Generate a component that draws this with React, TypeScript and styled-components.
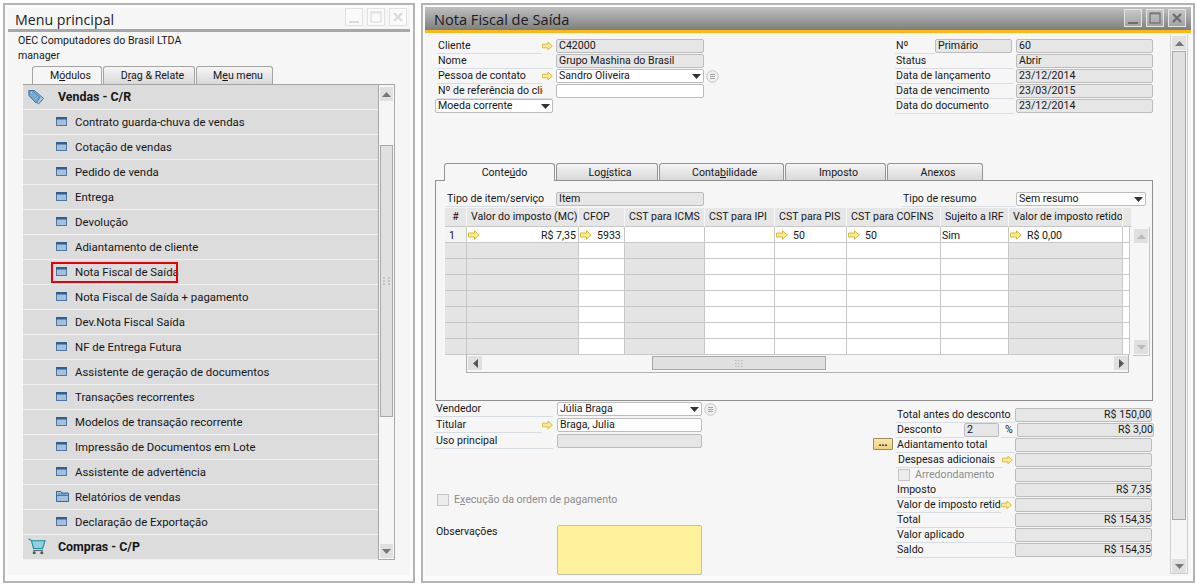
import React from "react";
import styled, { createGlobalStyle } from "styled-components";

const GlobalStyle = createGlobalStyle`
  html, body { margin: 0; padding: 0; background: #fff; }
  body {
    font-family: Roboto, "Open Sans", sans-serif;
    font-size: 10.6px;
    color: #161616;
  }
  * { box-sizing: border-box; }
  u { text-decoration-thickness: 1px; text-underline-offset: 1px; }
`;

const menuItems = [
  "Contrato guarda-chuva de vendas",
  "Cotação de vendas",
  "Pedido de venda",
  "Entrega",
  "Devolução",
  "Adiantamento de cliente",
  "Nota Fiscal de Saída",
  "Nota Fiscal de Saída + pagamento",
  "Dev.Nota Fiscal Saída",
  "NF de Entrega Futura",
  "Assistente de geração de documentos",
  "Transações recorrentes",
  "Modelos de transação recorrente",
  "Impressão de Documentos em Lote",
  "Assistente de advertência",
  "Relatórios de vendas",
  "Declaração de Exportação",
];

const columns = [
  { title: "#", w: 22, gray: true },
  { title: "Valor do imposto (MC)", w: 112, gray: true },
  { title: "CFOP", w: 46, gray: false },
  { title: "CST para ICMS", w: 80, gray: true },
  { title: "CST para IPI", w: 70, gray: false },
  { title: "CST para PIS", w: 72, gray: false },
  { title: "CST para COFINS", w: 94, gray: false },
  { title: "Sujeito a IRF", w: 68, gray: false },
  { title: "Valor de imposto retido", w: 114, gray: true },
  { title: "", w: 7, gray: false },
];

const Arrow = () => (
  <svg width="12" height="10" viewBox="0 0 12 10">
    <path d="M.5 3H6.5V.8L11.3 5 6.5 9.2V7H.5Z" fill="#fbe98c" stroke="#d9b840" />
  </svg>
);

const Caret = ({ dir = "down", color = "#333" }: { dir?: string; color?: string }) => {
  const points: Record<string, string> = {
    down: "0,0 9,0 4.5,5",
    up: "0,5 9,5 4.5,0",
    left: "5,0 5,9 0,4.5",
    right: "0,0 0,9 5,4.5",
  };
  const vertical = dir === "left" || dir === "right";
  return (
    <svg width={vertical ? 5 : 9} height={vertical ? 9 : 5} viewBox={vertical ? "0 0 5 9" : "0 0 9 5"}>
      <polygon points={points[dir]} fill={color} />
    </svg>
  );
};

const Grip = () => (
  <svg width="7" height="8" viewBox="0 0 7 8">
    {[0, 3, 6].map((y) =>
      [0, 5].map((x) => <rect key={`${x}-${y}`} x={x} y={y} width="2" height="2" fill="#c4c4c4" />)
    )}
  </svg>
);

const GripWide = () => (
  <svg width="8" height="7" viewBox="0 0 8 7">
    {[0, 3, 6].map((y) =>
      [0, 3, 6].map((x) => <rect key={`${x}-${y}`} x={x} y={y} width="1.5" height="1.2" fill="#bdbdbd" />)
    )}
  </svg>
);

const Chooser = () => (
  <ChooserBox>
    <svg width="13" height="13" viewBox="0 0 13 13">
      <circle cx="6.5" cy="6.5" r="5.8" fill="#efefef" stroke="#c8c8c8" />
      <path d="M4 4.5H9M4 6.5H9M4 8.5H9" stroke="#a4a4a4" />
    </svg>
  </ChooserBox>
);

const WindowIcon = () => (
  <svg width="11" height="9" viewBox="0 0 11 9">
    <rect x=".5" y=".5" width="10" height="8" fill="#a5c0dc" stroke="#4d78a3" />
    <rect x="0" y="0" width="11" height="2.5" fill="#2f5f8e" />
  </svg>
);

const FolderIcon = () => (
  <svg width="13" height="11" viewBox="0 0 13 11">
    <path d="M.5 10.5V.5H5L6 2H12.5V10.5Z" fill="#a5c0dc" stroke="#2f6a9c" />
    <path d="M.5 4.5H12.5M2 3H11" stroke="#2f6a9c" strokeWidth=".8" />
  </svg>
);

const TagIcon = () => (
  <svg width="17" height="16" viewBox="0 0 17 16">
    <path d="M1 1.5H6.5L15.5 9.5 10.5 15 1.5 7Z" fill="#a9c6e2" stroke="#3b75a8" />
    <path d="M1 1.5H4.5L12 8.5 8 14 1 6.5Z" fill="#7ea8cf" stroke="#3b75a8" />
    <circle cx="3.4" cy="3.8" r="1" fill="#fff" stroke="#2f6a9c" strokeWidth=".5" />
  </svg>
);

const CartIcon = () => (
  <svg width="18" height="17" viewBox="0 0 18 17">
    <path d="M.5 .8 3.5 2.8H17L14.6 10.5H5.5L3.5 2.8" fill="#8fd0dc" stroke="#1d8ba0" strokeWidth="1.1" />
    <path d="M5 12.5H15" stroke="#5a6a6a" strokeWidth="1.2" />
    <circle cx="6.2" cy="14.8" r="1.5" fill="#4c5a5a" />
    <circle cx="13.8" cy="14.8" r="1.5" fill="#4c5a5a" />
  </svg>
);

const WinButtons = ({ dim }: { dim?: boolean }) => {
  const c = dim ? "#dcdcdc" : "#6e6e6e";
  return (
    <WinButtonRow>
      <WinButton $dim={dim}>
        <svg width="14" height="14" viewBox="0 0 14 14">
          <rect x="2" y="11" width="10" height="2" fill={c} />
        </svg>
      </WinButton>
      <WinButton $dim={dim}>
        <svg width="14" height="14" viewBox="0 0 14 14">
          <rect x="2" y="2" width="10" height="10" fill="none" stroke={c} strokeWidth="1.2" />
          <rect x="2" y="2" width="10" height="1.6" fill={c} opacity=".6" />
        </svg>
      </WinButton>
      <WinButton $dim={dim}>
        <svg width="14" height="14" viewBox="0 0 14 14">
          <path d="M3 3 11 11M11 3 3 11" stroke={c} strokeWidth="2.4" />
        </svg>
      </WinButton>
    </WinButtonRow>
  );
};

export default function App() {
  return (
    <Desktop>
      <GlobalStyle />

      <MenuWindow>
        <Inner>
          <MenuTitleBar>
            <MenuTitle>Menu principal</MenuTitle>
            <WinButtons dim />
          </MenuTitleBar>
          <CompanyInfo>
            <div>OEC Computadores do Brasil LTDA</div>
            <div>manager</div>
          </CompanyInfo>
          <MenuTabs>
            <MenuTab $active $w={70}>M<u>ó</u>dulos</MenuTab>
            <MenuTab $w={92}>D<u>r</u>ag &amp; Relate</MenuTab>
            <MenuTab $w={77}>M<u>e</u>u menu</MenuTab>
          </MenuTabs>
          <MenuPanel>
            <MenuList>
              <SectionRow>
                <SectionIcon><TagIcon /></SectionIcon>
                Vendas - C/R
              </SectionRow>
              {menuItems.map((item) => (
                <MenuRow key={item}>
                  <MenuIcon>{item === "Relatórios de vendas" ? <FolderIcon /> : <WindowIcon />}</MenuIcon>
                  {item}
                  {item === "Nota Fiscal de Saída" && <RedMark />}
                </MenuRow>
              ))}
              <SectionRow>
                <SectionIcon><CartIcon /></SectionIcon>
                Compras - C/P
              </SectionRow>
            </MenuList>
            <MenuScroll>
              <ScrollButton><Caret dir="up" color="#777" /></ScrollButton>
              <MenuThumb><Grip /></MenuThumb>
              <ScrollButton><Caret color="#777" /></ScrollButton>
            </MenuScroll>
          </MenuPanel>
        </Inner>
      </MenuWindow>

      <DocWindow>
        <Inner>
          <DocTitleBar>
            <DocTitle>Nota Fiscal de Saída</DocTitle>
            <WinButtons />
          </DocTitleBar>
          <DocBody>
            <Form>
              <HeaderArea>
                <div>
                  <Row>
                    <Label $w={105}>Cliente</Label>
                    <ArrowSlot><Arrow /></ArrowSlot>
                    <Field $w={148} $ro $ml={3}>C42000</Field>
                  </Row>
                  <Row>
                    <Label $w={116}>Nome</Label>
                    <Field $w={148} $ro $ml={3}>Grupo Mashina do Brasil</Field>
                  </Row>
                  <Row>
                    <Label $w={105}>Pessoa de contato</Label>
                    <ArrowSlot><Arrow /></ArrowSlot>
                    <Field $w={148} $ml={3}>Sandro Oliveira<Caret /></Field>
                    <Chooser />
                  </Row>
                  <Row>
                    <Label $w={106}>Nº de referência do clie</Label>
                    <Label $w={10} />
                    <Field $w={148} $ml={3} />
                  </Row>
                  <Row>
                    <CurrencySelect $w={118}>Moeda corrente<Caret /></CurrencySelect>
                  </Row>
                </div>
                <div>
                  <Row>
                    <Label $w={40}>Nº</Label>
                    <Field $w={77} $ro>Primário</Field>
                    <Field $w={137} $ro $ml={4}>60</Field>
                  </Row>
                  <Row>
                    <Label $w={119}>Status</Label>
                    <Field $w={137} $ro $ml={2}>Abrir</Field>
                  </Row>
                  <Row>
                    <Label $w={119}>Data de lançamento</Label>
                    <Field $w={137} $ro $ml={2}>23/12/2014</Field>
                  </Row>
                  <Row>
                    <Label $w={119}>Data de vencimento</Label>
                    <Field $w={137} $ro $ml={2}>23/03/2015</Field>
                  </Row>
                  <Row>
                    <Label $w={119}>Data do documento</Label>
                    <Field $w={137} $ro $ml={2}>23/12/2014</Field>
                  </Row>
                </div>
              </HeaderArea>

              <DocTabs>
                <DocTab $active $w={111}>Conte<u>ú</u>do</DocTab>
                <DocTab $w={102}>Log<u>í</u>stica</DocTab>
                <DocTab $w={125}>Conta<u>b</u>ilidade</DocTab>
                <DocTab $w={101}>Imposto</DocTab>
                <DocTab $w={96}>Anexos</DocTab>
              </DocTabs>

              <TabPanel>
                <PanelTopRow>
                  <Label $w={110}>Tipo de item/serviço</Label>
                  <Field $w={148} $ro>Item</Field>
                  <PanelRight>
                    <Label $w={114}>Tipo de resumo</Label>
                    <Field $w={130}>Sem resumo<Caret /></Field>
                  </PanelRight>
                </PanelTopRow>

                <GridWrap>
                  <div>
                    <GridRow>
                      {columns.map((c, i) => (
                        <HeadCell key={i} $w={c.w} $center={i === 0}>{c.title}</HeadCell>
                      ))}
                    </GridRow>
                    <GridRow>
                      <BodyCell $w={22} $num>1</BodyCell>
                      <BodyCell $w={112} $between><Arrow /><span>R$ 7,35</span></BodyCell>
                      <BodyCell $w={46}><Arrow /><CellText>5933</CellText></BodyCell>
                      <BodyCell $w={80} />
                      <BodyCell $w={70} />
                      <BodyCell $w={72}><Arrow /><CellText>50</CellText></BodyCell>
                      <BodyCell $w={94}><Arrow /><CellText>50</CellText></BodyCell>
                      <BodyCell $w={68}>Sim</BodyCell>
                      <BodyCell $w={114}><Arrow /><CellText>R$ 0,00</CellText></BodyCell>
                      <BodyCell $w={7} />
                    </GridRow>
                    {[0, 1, 2, 3, 4, 5, 6].map((r) => (
                      <GridRow key={r}>
                        {columns.map((c, i) => (
                          <BodyCell key={i} $w={c.w} $gray={c.gray} />
                        ))}
                      </GridRow>
                    ))}
                    <HScroll>
                      <HScrollButton><Caret dir="left" color="#555" /></HScrollButton>
                      <HThumb><GripWide /></HThumb>
                      <HScrollButton><Caret dir="right" color="#555" /></HScrollButton>
                    </HScroll>
                  </div>
                  <GridVScroll>
                    <ScrollButton><Caret dir="up" color="#bbb" /></ScrollButton>
                    <ScrollButton><Caret color="#bbb" /></ScrollButton>
                  </GridVScroll>
                </GridWrap>
              </TabPanel>

              <Footer>
                <div>
                  <FooterRow>
                    <Label $w={119} $pl={2}>Vendedor</Label>
                    <Field $w={145} $ml={4}>Júlia Braga<Caret /></Field>
                    <Chooser />
                  </FooterRow>
                  <FooterRow>
                    <Label $w={108} $pl={2}>Titular</Label>
                    <ArrowSlot><Arrow /></ArrowSlot>
                    <Field $w={145} $ml={4}>Braga, Julia</Field>
                  </FooterRow>
                  <FooterRow>
                    <Label $w={119} $pl={2}>Uso principal</Label>
                    <Field $w={145} $ro $ml={4} />
                  </FooterRow>
                  <CheckRow>
                    <CheckBox />
                    <Muted>E<u>x</u>ecução da ordem de pagamento</Muted>
                  </CheckRow>
                  <NotesRow>
                    <NotesLabel>Observações</NotesLabel>
                    <NotesBox />
                  </NotesRow>
                </div>

                <Totals>
                  <Row>
                    <ButtonSlot />
                    <Label $w={119}>Total antes do desconto</Label>
                    <Field $w={137} $ro $right>R$ 150,00</Field>
                  </Row>
                  <Row>
                    <ButtonSlot />
                    <Label $w={68}>Desconto</Label>
                    <Field $w={35} $ro>2</Field>
                    <PercentLabel>%</PercentLabel>
                    <Field $w={137} $ro $right>R$ 3,00</Field>
                  </Row>
                  <Row>
                    <ButtonSlot><DotsButton>...</DotsButton></ButtonSlot>
                    <Label $w={119}>Adiantamento total</Label>
                    <Field $w={137} $ro />
                  </Row>
                  <Row>
                    <ButtonSlot />
                    <Label $w={106} $pl={2}>Despesas adicionais</Label>
                    <ArrowSlot><Arrow /></ArrowSlot>
                    <Field $w={137} $ro $ml={2} />
                  </Row>
                  <Row>
                    <ButtonSlot />
                    <RoundCell>
                      <CheckBox />
                      <Muted>Arredondamento</Muted>
                    </RoundCell>
                    <Field $w={137} $ro />
                  </Row>
                  <Row>
                    <ButtonSlot />
                    <Label $w={119}>Imposto</Label>
                    <Field $w={137} $ro $right>R$ 7,35</Field>
                  </Row>
                  <Row>
                    <ButtonSlot />
                    <Label $w={105}>Valor de imposto retido</Label>
                    <ArrowSlot><Arrow /></ArrowSlot>
                    <Field $w={137} $ro $ml={3} />
                  </Row>
                  <Row>
                    <ButtonSlot />
                    <Label $w={119}>Total</Label>
                    <Field $w={137} $ro $right>R$ 154,35</Field>
                  </Row>
                  <Row>
                    <ButtonSlot />
                    <Label $w={119}>Valor aplicado</Label>
                    <Field $w={137} $ro />
                  </Row>
                  <Row>
                    <ButtonSlot />
                    <Label $w={119}>Saldo</Label>
                    <Field $w={137} $ro $right>R$ 154,35</Field>
                  </Row>
                </Totals>
              </Footer>
            </Form>

            <FormScroll>
              <ScrollButton><Caret dir="up" color="#777" /></ScrollButton>
              <FormThumb />
              <ScrollButton><Caret color="#777" /></ScrollButton>
            </FormScroll>
          </DocBody>
        </Inner>
      </DocWindow>
    </Desktop>
  );
}

/* =========== STYLES ============ */

const Desktop = styled.div`
  display: flex;
  gap: 6px;
  width: 1197px;
  height: 585px;
  padding: 3px 2px 2px 3px;
  overflow: hidden;
`;

const MenuWindow = styled.section`
  width: 412px;
  height: 580px;
  padding: 3px 3px 6px;
  background: #fbfbfb;
  border: 2px solid #b4b4b4;
`;

const DocWindow = styled.section`
  width: 774px;
  height: 580px;
  padding: 2px 2px 5px;
  background: #fbfbfb;
  border: 2px solid #b4b4b4;
`;

const Inner = styled.div`
  display: flex;
  flex-direction: column;
  height: 100%;
  background: #f6f6f6;
`;

const MenuTitleBar = styled.header`
  display: flex;
  justify-content: space-between;
  height: 24px;
  padding: 0 3px 0 7px;
  border-bottom: 3px solid #a8a8a8;
`;

const MenuTitle = styled.h1`
  margin: 0;
  font-family: "Open Sans", sans-serif;
  font-size: 14.2px;
  font-weight: 400;
  line-height: 24px;
  color: #222;
`;

const WinButtonRow = styled.div`
  display: flex;
  gap: 4px;
`;

const WinButton = styled.div<{ $dim?: boolean }>`
  display: flex;
  align-items: center;
  justify-content: center;
  width: 18px;
  height: 18px;
  border: 1px solid ${({ $dim }) => ($dim ? "#e2e2e2" : "#e4e4e4")};
  background: ${({ $dim }) => ($dim ? "#fafafa" : "rgba(255,255,255,0.22)")};
`;

const CompanyInfo = styled.div`
  padding: 1px 0 0 10px;
  line-height: 15px;
  height: 34px;
`;

const MenuTabs = styled.nav`
  display: flex;
  gap: 1px;
  margin-left: 24px;
  height: 18px;
`;

const MenuTab = styled.div<{ $active?: boolean; $w: number }>`
  width: ${({ $w }) => $w}px;
  padding-left: 7px;
  text-align: center;
  line-height: 18px;
  border: 1px solid #a4a4a4;
  border-bottom: 0;
  border-radius: 3px 3px 0 0;
  background: ${({ $active }) => ($active ? "#f6f6f6" : "linear-gradient(#f6f6f6, #d8d8d8)")};
`;

const MenuPanel = styled.div`
  display: flex;
  width: 372px;
  height: 476px;
  margin-left: 15px;
  border-top: 1px solid #a4a4a4;
`;

const MenuList = styled.div`
  width: 355px;
`;

const MenuRow = styled.div`
  position: relative;
  display: flex;
  align-items: center;
  height: 25px;
  padding: 0 0 1px 33px;
  font-size: 11.4px;
  background: #dcdcdc;
  border-bottom: 1px solid #f0f0f0;
`;

const SectionRow = styled(MenuRow)`
  padding-left: 5px;
  font-size: 12.4px;
  font-weight: 700;
`;

const MenuIcon = styled.span`
  display: flex;
  align-items: center;
  width: 19px;
`;

const SectionIcon = styled.span`
  display: flex;
  align-items: center;
  width: 30px;
`;

const RedMark = styled.span`
  position: absolute;
  left: 28px;
  top: 2px;
  width: 127px;
  height: 21px;
  border: 2px solid #e8000b;
`;

const MenuScroll = styled.div`
  display: flex;
  flex-direction: column;
  width: 17px;
  padding: 2px 1px 1px;
  border-left: 1px solid #a8a8a8;
  border-right: 1px solid #a8a8a8;
  border-bottom: 1px solid #a8a8a8;
  background: #f6f6f6;
`;

const ScrollButton = styled.div`
  display: flex;
  align-items: center;
  justify-content: center;
  flex: none;
  width: 100%;
  height: 14px;
  background: #e0e0e0;
`;

const MenuThumb = styled.div`
  display: flex;
  align-items: center;
  justify-content: center;
  height: 272px;
  margin: 44px 0 127px;
  background: #e0e0e0;
  border: 1px solid #a8a8a8;
`;

const DocTitleBar = styled.header`
  display: flex;
  justify-content: space-between;
  height: 26px;
  padding: 2px 5px 0 9px;
  background: linear-gradient(#c0c0c0, #7e7e7e);
  border-bottom: 3px solid #fdb913;
`;

const DocTitle = styled.h1`
  margin: 0;
  font-family: "Open Sans", sans-serif;
  font-size: 14.6px;
  font-weight: 400;
  line-height: 21px;
  color: #1c1c1c;
`;

const DocBody = styled.div`
  display: flex;
  flex: 1;
  min-height: 0;
`;

const Form = styled.div`
  width: 745px;
  padding: 6px 0 0 12px;
`;

const HeaderArea = styled.div`
  display: flex;
  justify-content: space-between;
  width: 716px;
  height: 124px;
`;

const Row = styled.div`
  display: flex;
  height: 15px;
`;

const Label = styled.div<{ $w: number; $pl?: number }>`
  flex: none;
  width: ${({ $w }) => $w}px;
  height: 15px;
  padding-left: ${({ $pl }) => $pl ?? 1}px;
  line-height: 14px;
  white-space: nowrap;
  overflow: hidden;
  border-bottom: 1px solid #d8dde3;
`;

const ArrowSlot = styled.div`
  display: flex;
  align-items: center;
  flex: none;
  width: 11px;
  height: 14px;
`;

const Field = styled.div<{ $w: number; $ro?: boolean; $ml?: number; $right?: boolean }>`
  display: flex;
  flex: none;
  align-items: center;
  justify-content: ${({ $right }) => ($right ? "flex-end" : "space-between")};
  width: ${({ $w }) => $w}px;
  height: 14px;
  margin-left: ${({ $ml }) => $ml ?? 0}px;
  padding: 0 ${({ $right }) => ($right ? 0 : 2)}px 0 2px;
  line-height: 12px;
  white-space: nowrap;
  overflow: hidden;
  background: ${({ $ro }) => ($ro ? "#e6e6e6" : "#fff")};
  border: 1px solid #bcbcbc;
  border-radius: 2px;
`;

const CurrencySelect = styled(Field)`
  margin-left: -2px;
`;

const ChooserBox = styled.span`
  display: flex;
  align-items: center;
  margin-left: 2px;
  height: 14px;
`;

const DocTabs = styled.nav`
  display: flex;
  gap: 1px;
  height: 17px;
  margin-left: 7px;
`;

const DocTab = styled.div<{ $active?: boolean; $w: number }>`
  position: relative;
  z-index: ${({ $active }) => ($active ? 1 : 0)};
  width: ${({ $w }) => $w}px;
  height: ${({ $active }) => ($active ? 18 : 17)}px;
  padding-left: ${({ $active }) => ($active ? 10 : 6)}px;
  text-align: center;
  line-height: 17px;
  border: 1px solid #949494;
  border-bottom: 0;
  border-radius: 3px 3px 0 0;
  background: ${({ $active }) => ($active ? "#f6f6f6" : "linear-gradient(#f4f4f4, #d8d8d8)")};
`;

const TabPanel = styled.div`
  width: 718px;
  height: 221px;
  margin-left: -2px;
  padding-top: 11px;
  border: 1px solid #909090;
`;

const PanelTopRow = styled.div`
  display: flex;
  height: 16px;
  padding: 0 6px 0 10px;
`;

const PanelRight = styled.div`
  display: flex;
  margin-left: auto;
`;

const GridWrap = styled.div`
  display: flex;
  margin: 0 0 0 9px;
`;

const GridRow = styled.div`
  display: flex;
`;

const HeadCell = styled.div<{ $w: number; $center?: boolean }>`
  flex: none;
  width: ${({ $w }) => $w}px;
  height: 19px;
  padding: 0 ${({ $center }) => ($center ? 0 : 4)}px;
  text-align: ${({ $center }) => ($center ? "center" : "left")};
  line-height: 17px;
  white-space: nowrap;
  overflow: hidden;
  background: #e6e6e6;
  border-right: 1px solid #f6f6f6;
  border-bottom: 1px solid #c8c8c8;
`;

const BodyCell = styled.div<{ $w: number; $gray?: boolean; $num?: boolean; $between?: boolean }>`
  display: flex;
  flex: none;
  align-items: center;
  justify-content: ${({ $between }) => ($between ? "space-between" : "flex-start")};
  width: ${({ $w }) => $w}px;
  height: 16px;
  padding: 1px 2px 0 ${({ $num }) => ($num ? 4 : 1)}px;
  background: ${({ $gray, $num }) => ($num ? "#f4f4f4" : $gray ? "#e4e4e4" : "#fff")};
  border-right: 1px solid #c8c8c8;
  border-bottom: 1px solid #c8c8c8;
  white-space: nowrap;
  overflow: hidden;
`;

const CellText = styled.span`
  margin-left: 5px;
`;

const HScroll = styled.div`
  display: flex;
  width: 663px;
  height: 18px;
  margin-left: 21px;
  padding: 1px 0 0 1px;
  border: 1px solid #b0b0b0;
  border-top: 0;
`;

const HScrollButton = styled.div`
  display: flex;
  align-items: center;
  justify-content: center;
  flex: none;
  width: 14px;
  height: 14px;
  background: #e0e0e0;
`;

const HThumb = styled.div`
  display: flex;
  align-items: center;
  justify-content: center;
  width: 174px;
  height: 14px;
  margin: 0 288px 0 170px;
  background: #e0e0e0;
  border: 1px solid #a8a8a8;
`;

const GridVScroll = styled.div`
  display: flex;
  flex-direction: column;
  justify-content: space-between;
  width: 17px;
  height: 129px;
  margin: 19px 0 0 1px;
  padding: 2px 1px 1px;
  border-right: 1px solid #c4c4c4;
  border-bottom: 1px solid #c4c4c4;
`;

const Footer = styled.div`
  display: grid;
  grid-template-columns: 439px auto;
  margin: 1px 0 0 -3px;
`;

const FooterRow = styled.div`
  display: flex;
  height: 16px;
`;

const CheckRow = styled.div`
  display: flex;
  align-items: center;
  height: 14px;
  margin: 43px 0 0 3px;
`;

const CheckBox = styled.span`
  flex: none;
  width: 12px;
  height: 12px;
  background: #ececec;
  border: 1px solid #c4c4c4;
`;

const Muted = styled.span`
  margin: 0 0 2px 5px;
  color: #8c8c8c;
  white-space: nowrap;
`;

const NotesRow = styled.div`
  display: flex;
  margin-top: 18px;
`;

const NotesLabel = styled.div`
  width: 123px;
  line-height: 14px;
  padding-left: 2px;
`;

const NotesBox = styled.div`
  width: 145px;
  height: 50px;
  background: #fff09c;
  border: 1px solid #c0c0b0;
  border-radius: 2px;
`;

const Totals = styled.div`
  margin-top: 6px;
`;

const ButtonSlot = styled.div`
  flex: none;
  width: 23px;
`;

const DotsButton = styled.div`
  width: 20px;
  height: 12px;
  line-height: 8px;
  text-align: center;
  font-weight: 700;
  background: linear-gradient(#fbe6ae, #f3cf7c);
  border: 1px solid #9a8a60;
  border-radius: 1px;
`;

const PercentLabel = styled.div`
  flex: none;
  width: 16px;
  height: 15px;
  margin-left: 2px;
  line-height: 14px;
  text-align: center;
  border-bottom: 1px solid #d8dde3;
`;

const RoundCell = styled.div`
  display: flex;
  align-items: center;
  width: 119px;
  height: 14px;
  padding-left: 2px;
`;

const FormScroll = styled.aside`
  display: flex;
  flex-direction: column;
  width: 18px;
  height: 539px;
  margin: 2px 0 0 0;
  padding: 1px 1px 0;
  border: 1px solid #cfcfcf;
  border-top: 0;
`;

const FormThumb = styled.div`
  height: 474px;
  margin: 1px 0 39px;
  background: #e0e0e0;
  border: 1px solid #a8a8a8;
`;
